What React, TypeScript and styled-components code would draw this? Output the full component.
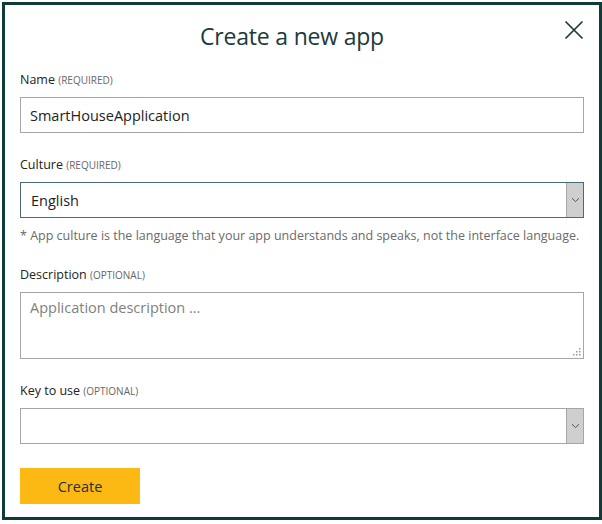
import React from "react";
import styled, { createGlobalStyle } from "styled-components";

const GlobalStyle = createGlobalStyle`
  html, body { margin: 0; padding: 0; background: #ffffff; }
  body { font-family: "Open Sans", "Noto Sans", sans-serif; }
  * { box-sizing: border-box; }
`;

const Frame = styled.div`
  margin: 2px 0 0 2px;
  width: 600px;
  height: 518px;
  border: 3px solid #0f3b3c;
  padding: 15px 15px 0 15px;
  background: #fff;
  display: flex;
  flex-direction: column;
`;

const Header = styled.div`
  display: flex;
  align-items: center;
  height: 32px;
  margin-bottom: 18px;
`;

const Title = styled.h1`
  flex: 1;
  margin: 0;
  text-align: center;
  font-weight: 400;
  font-size: 23px;
  line-height: 30px;
  color: #1d3a3a;
  letter-spacing: -0.2px;
`;

const CloseButton = styled.button`
  width: 20px;
  height: 20px;
  padding: 0;
  border: none;
  background: transparent;
  display: flex;
  align-items: center;
  justify-content: center;
  margin-right: 0;
  margin-top: -12px;
`;

const Field = styled.div<{ $gap?: number }>`
  display: flex;
  flex-direction: column;
  gap: 9px;
  margin-bottom: ${(p) => (p.$gap ?? 22)}px;
`;

const Label = styled.label`
  display: block;
  height: 18px;
  font-size: 12.5px;
  line-height: 20px;
  color: #222;
  white-space: nowrap;
`;

const Hint = styled.span`
  font-size: 10px;
  line-height: 10px;
  color: #666;
`;

const TextBox = styled.div<{ $muted?: boolean; $h?: number }>`
  height: ${(p) => p.$h ?? 36}px;
  border: 1px solid #a6a6a6;
  padding: ${(p) => (p.$h ? "5px 9px 0" : "0 9px")};
  display: flex;
  align-items: ${(p) => (p.$h ? "flex-start" : "center")};
  font-size: 14.5px;
  color: ${(p) => (p.$muted ? "#808080" : "#222")};
  position: relative;
  background: #fff;
`;

const SelectBox = styled.div<{ $focus?: boolean }>`
  height: 36px;
  border: 1px solid ${(p) => (p.$focus ? "#4a6a78" : "#a6a6a6")};
  display: flex;
  align-items: stretch;
  font-size: 14.5px;
  color: #222;
`;

const SelectValue = styled.div`
  flex: 1;
  display: flex;
  align-items: center;
  padding-left: 10px;
`;

const SelectArrow = styled.div`
  width: 17px;
  background: #cfcfcf;
  border-left: 1px solid #a6a6a6;
  display: flex;
  align-items: center;
  justify-content: center;
`;

const Note = styled.div`
  height: 16px;
  font-size: 12.5px;
  line-height: 16px;
  color: #6a6a6a;
  margin-top: -12px;
  margin-bottom: 21px;
  white-space: nowrap;
`;

const Grip = styled.svg`
  position: absolute;
  right: 2px;
  bottom: 2px;
`;

const CreateButton = styled.button`
  margin-top: 0;
  width: 120px;
  height: 36px;
  border: none;
  background: #fcb813;
  color: #1f2f3a;
  font-family: inherit;
  font-size: 14.5px;
  padding: 0;
`;

const Chevron = () => (
  <svg width="9" height="6" viewBox="0 0 9 6">
    <path d="M1 1.2 L4.5 4.6 L8 1.2" fill="none" stroke="#555" strokeWidth="1" />
  </svg>
);

export default function App() {
  return (
    <>
      <GlobalStyle />
      <Frame>
        <Header>
          <Title>Create a new app</Title>
          <CloseButton aria-label="Close">
            <svg width="20" height="20" viewBox="0 0 20 20">
              <path d="M1.5 1.5 L18.5 18.5 M18.5 1.5 L1.5 18.5" stroke="#1d3a3a" strokeWidth="1.7" fill="none" />
            </svg>
          </CloseButton>
        </Header>

        <Field>
          <Label>
            Name <Hint>(REQUIRED)</Hint>
          </Label>
          <TextBox>SmartHouseApplication</TextBox>
        </Field>

        <Field>
          <Label>
            Culture <Hint>(REQUIRED)</Hint>
          </Label>
          <SelectBox $focus>
            <SelectValue>English</SelectValue>
            <SelectArrow>
              <Chevron />
            </SelectArrow>
          </SelectBox>
        </Field>
        <Note>* App culture is the language that your app understands and speaks, not the interface language.</Note>

        <Field>
          <Label>
            Description <Hint>(OPTIONAL)</Hint>
          </Label>
          <TextBox $muted $h={67}>
            Application description ...
            <Grip width="8" height="8" viewBox="0 0 8 8">
              <rect x="6" y="0" width="1.5" height="1.5" fill="#999" />
              <rect x="3" y="3" width="1.5" height="1.5" fill="#999" />
              <rect x="6" y="3" width="1.5" height="1.5" fill="#999" />
              <rect x="0" y="6" width="1.5" height="1.5" fill="#999" />
              <rect x="3" y="6" width="1.5" height="1.5" fill="#999" />
              <rect x="6" y="6" width="1.5" height="1.5" fill="#999" />
            </Grip>
          </TextBox>
        </Field>

        <Field $gap={24}>
          <Label>
            Key to use <Hint>(OPTIONAL)</Hint>
          </Label>
          <SelectBox>
            <SelectValue />
            <SelectArrow>
              <Chevron />
            </SelectArrow>
          </SelectBox>
        </Field>

        <div>
          <CreateButton>Create</CreateButton>
        </div>
      </Frame>
    </>
  );
}
